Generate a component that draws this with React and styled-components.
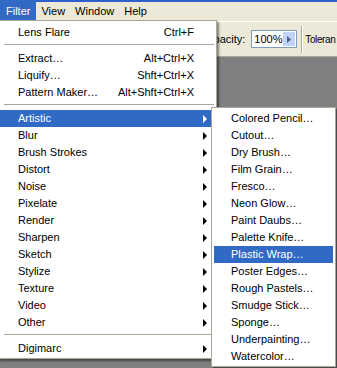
import React from "react";
import styled, { createGlobalStyle } from "styled-components";

const GlobalStyle = createGlobalStyle`
  html, body {
    margin: 0;
    padding: 0;
    background: #808080;
  }
  body {
    font-family: "Liberation Sans", Arial, sans-serif;
    font-size: 11px;
    color: #000;
  }
`;

const Screen = styled.div`
  position: relative;
  width: 337px;
  height: 368px;
  overflow: hidden;
  display: flex;
  flex-direction: column;
  background: #808080;
`;

const MenuBar = styled.div`
  display: flex;
  height: 19px;
  border-top: 2px solid #2f5fcf;
  background: #ece9d8;
`;

const MenuTitle = styled.div`
  padding: 0 ${(p) => (p.$active ? "6px" : "5px")};
  margin-top: ${(p) => (p.$active ? "-2px" : "0")};
  height: ${(p) => (p.$active ? "21px" : "19px")};
  line-height: ${(p) => (p.$active ? "23px" : "19px")};
  background: ${(p) => (p.$active ? "#316ac5" : "transparent")};
  color: ${(p) => (p.$active ? "#fff" : "#000")};
`;

const OptionsBar = styled.div`
  display: flex;
  align-items: center;
  height: 34px;
  padding-left: 205px;
  border-top: 1px solid #fff;
  border-bottom: 1px solid #aca899;
  background: #ece9d8;
  white-space: nowrap;
`;

const Label = styled.span`
  margin-right: 6px;
`;

const EdgeLabel = styled.span`
  font-size: 10px;
  letter-spacing: -0.4px;
`;

const Field = styled.div`
  display: flex;
  align-items: center;
  width: 44px;
  height: 16px;
  border: 1px solid #7f9db9;
  background: #fff;
`;

const FieldText = styled.span`
  flex: 1;
  padding-left: 2px;
`;

const FieldButton = styled.div`
  display: flex;
  align-items: center;
  justify-content: center;
  width: 14px;
  height: 14px;
  margin-right: 1px;
  background: #c1d3fb;
`;

const Divider = styled.div`
  width: 1px;
  height: 27px;
  margin: 0 2px 0 4px;
  background: #aca899;
  border-right: 1px solid #fff;
`;

const Canvas = styled.div`
  flex: 1;
  background: #808080;
`;

const Menu = styled.div`
  position: absolute;
  top: ${(p) => p.$top}px;
  left: ${(p) => p.$left}px;
  width: ${(p) => p.$width}px;
  box-sizing: border-box;
  padding: ${(p) => p.$pad};
  background: #fff;
  border: 1px solid #aca899;
  box-shadow: 2px 2px 2px rgba(0, 0, 0, 0.45);
`;

const Item = styled.div`
  position: relative;
  display: flex;
  height: 17px;
  line-height: 17px;
  padding: 0 20px 0 ${(p) => p.$indent}px;
  background: ${(p) => (p.$active ? "#316ac5" : "transparent")};
  color: ${(p) => (p.$active ? "#fff" : "#000")};
  white-space: nowrap;
`;

const ItemText = styled.span`
  flex: 1;
`;

const Shortcut = styled.span`
  text-align: right;
`;

const Arrow = styled.span`
  position: absolute;
  right: 7px;
  top: 5px;
  width: 0;
  height: 0;
  border-style: solid;
  border-width: 4px 0 4px 4px;
  border-color: transparent transparent transparent currentColor;
`;

const Separator = styled.div`
  height: 1px;
  margin: 3px 0 5px 4px;
  background: #aca899;
`;

const titles = ["Filter", "View", "Window", "Help"];

const filterMenu = [
  { label: "Lens Flare", key: "Ctrl+F" },
  "sep",
  { label: "Extract…", key: "Alt+Ctrl+X" },
  { label: "Liquify…", key: "Shft+Ctrl+X" },
  { label: "Pattern Maker…", key: "Alt+Shft+Ctrl+X" },
  "sep",
  { label: "Artistic", sub: true, active: true },
  { label: "Blur", sub: true },
  { label: "Brush Strokes", sub: true },
  { label: "Distort", sub: true },
  { label: "Noise", sub: true },
  { label: "Pixelate", sub: true },
  { label: "Render", sub: true },
  { label: "Sharpen", sub: true },
  { label: "Sketch", sub: true },
  { label: "Stylize", sub: true },
  { label: "Texture", sub: true },
  { label: "Video", sub: true },
  { label: "Other", sub: true },
  "sep",
  { label: "Digimarc", sub: true },
];

const artistic = [
  "Colored Pencil…",
  "Cutout…",
  "Dry Brush…",
  "Film Grain…",
  "Fresco…",
  "Neon Glow…",
  "Paint Daubs…",
  "Palette Knife…",
  "Plastic Wrap…",
  "Poster Edges…",
  "Rough Pastels…",
  "Smudge Stick…",
  "Sponge…",
  "Underpainting…",
  "Watercolor…",
];

export default function App() {
  return (
    <Screen>
      <GlobalStyle />
      <MenuBar>
        {titles.map((t, i) => (
          <MenuTitle key={t} $active={i === 0}>
            {t}
          </MenuTitle>
        ))}
      </MenuBar>
      <OptionsBar>
        <Label>Opacity:</Label>
        <Field>
          <FieldText>100%</FieldText>
          <FieldButton>
            <svg width="4" height="7" viewBox="0 0 4 7">
              <polygon points="0,0 4,3.5 0,7" fill="#4d6185" />
            </svg>
          </FieldButton>
        </Field>
        <Divider />
        <EdgeLabel>Toleran</EdgeLabel>
      </OptionsBar>
      <Canvas />

      <Menu $top={20} $left={-3} $width={220} $pad="3px 2px 1px 2px">
        {filterMenu.map((it, i) =>
          it === "sep" ? (
            <Separator key={i} />
          ) : (
            <Item key={i} $active={it.active} $indent={18}>
              <ItemText>{it.label}</ItemText>
              {it.key && <Shortcut>{it.key}</Shortcut>}
              {it.sub && <Arrow />}
            </Item>
          )
        )}
      </Menu>

      <Menu $top={107} $left={211} $width={125} $pad="2px 2px 1px 2px">
        {artistic.map((label) => (
          <Item key={label} $active={label === "Plastic Wrap…"} $indent={17}>
            <ItemText>{label}</ItemText>
          </Item>
        ))}
      </Menu>
    </Screen>
  );
}
